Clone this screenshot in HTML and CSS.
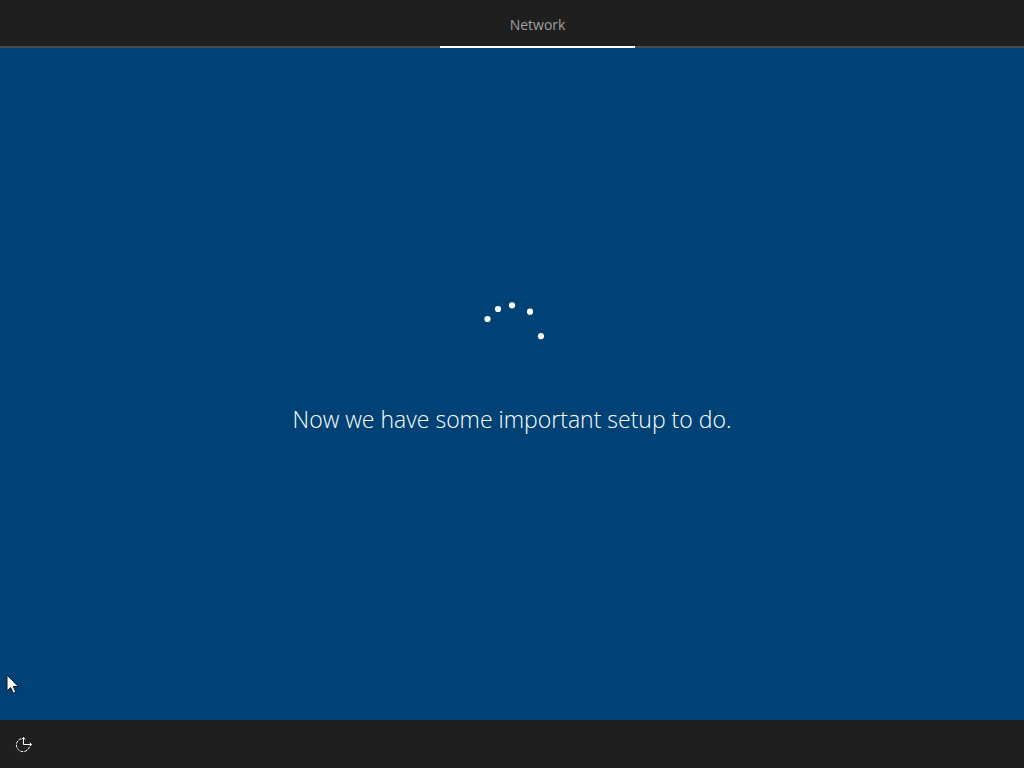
FILE: index.html
```
<!DOCTYPE html>
<html lang="en">
<head>
<meta charset="utf-8">
<meta name="viewport" content="width=device-width, initial-scale=1">
<title>Setup</title>
<link rel="stylesheet" href="styles.css">
</head>
<body>
<div class="setup">
  <header class="steps">
    <a class="step" href="#network" aria-current="step">Network</a>
  </header>
  <main class="stage" id="network">
    <svg class="spinner" width="64" height="64" viewBox="0 0 64 64" aria-hidden="true">
      <circle cx="7.5" cy="19" r="3.1"/>
      <circle cx="18" cy="9" r="3.1"/>
      <circle cx="32" cy="5.3" r="3.1"/>
      <circle cx="50" cy="11.7" r="3.1"/>
      <circle cx="61" cy="36.2" r="3.1"/>
    </svg>
    <h1 class="message">Now we have some important setup to do.</h1>
    <svg class="pointer" width="14" height="21" viewBox="0 0 14 21" aria-hidden="true">
      <path d="M1 1V17L4.7 13.5L7.2 19.2L9.8 18L7.3 12.5H12.3Z"/>
    </svg>
  </main>
  <footer class="toolbar">
    <button class="access" type="button" aria-label="Ease of Access">
      <svg width="20" height="20" viewBox="0 0 20 20" aria-hidden="true">
        <path class="ring" d="M7.2 4.7A6.6 6.6 0 1 0 15.4 12.8"/>
        <path d="M9.5 3.5V10.5H17.5M7.8 5.4L9.5 3.5L11.2 5.4M15.8 8.8L17.6 10.5L15.8 12.2"/>
      </svg>
    </button>
  </footer>
</div>
</body>
</html>
```
FILE: styles.css
```
* { box-sizing: border-box; }

body {
  margin: 0;
  background: #004275;
  color: #fff;
  font-family: "Segoe UI", "Open Sans", "Noto Sans", sans-serif;
}

.setup {
  display: grid;
  grid-template-rows: auto 1fr auto;
  min-height: 100vh;
}

.steps {
  display: grid;
  grid-template-columns: 43% 19% 1fr;
  background: #1f1f1f;
  box-shadow: inset 0 -2px #4c4c4c;
}

.step {
  grid-column: 2;
  padding: 15px 0 11px;
  border-bottom: 2px solid #fff;
  color: #a0a0a0;
  font-size: 14px;
  line-height: 20px;
  text-align: center;
  text-decoration: none;
}

.stage {
  position: relative;
  display: flex;
  flex-direction: column;
  align-items: center;
  justify-content: center;
  gap: 37px;
  padding-bottom: 31px;
}

.spinner { fill: #fff; }

.message {
  margin: 0;
  font-size: 23px;
  font-weight: 350;
  line-height: 36px;
}

.pointer {
  position: absolute;
  left: 6px;
  bottom: 25px;
  fill: #fff;
  stroke: #00182c;
  stroke-width: 1;
}

.toolbar {
  display: flex;
  align-items: center;
  height: 48px;
  padding: 0 14px;
  background: #1f1f1f;
}

.access {
  display: flex;
  padding: 0;
  border: 0;
  background: none;
  color: #fff;
}

.access svg {
  fill: none;
  stroke: currentColor;
}

.access .ring { stroke-dasharray: 3 1; }
```
